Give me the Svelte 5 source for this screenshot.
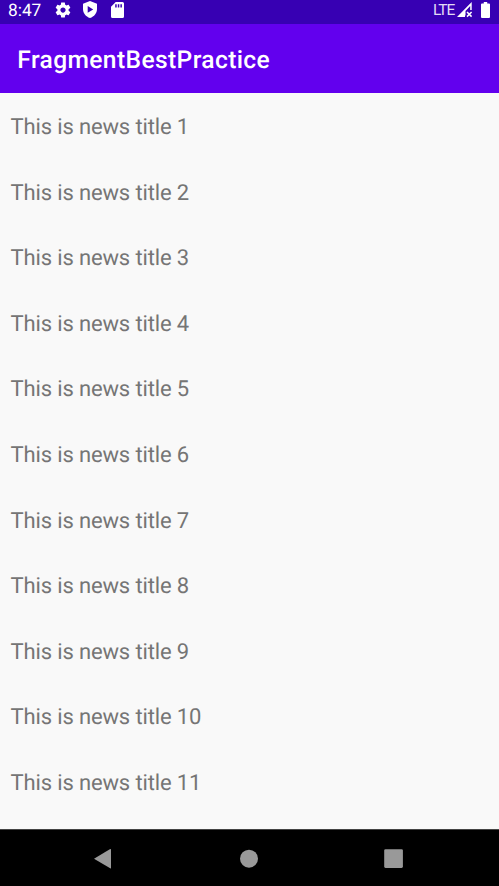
<script>
  const titles = Array.from({ length: 11 }, (_, i) => `This is news title ${i + 1}`);
</script>

<div class="screen">
  <header class="status">
    <span class="time">8:47</span>
    <svg class="gear" width="18" height="18" viewBox="0 0 24 24"><path fill-rule="evenodd" d="M19.43 12.98c.04-.32.07-.64.07-.98s-.03-.66-.07-.98l2.11-1.65c.19-.15.24-.42.12-.64l-2-3.46c-.12-.22-.39-.3-.61-.22l-2.49 1c-.52-.4-1.08-.73-1.69-.98l-.38-2.65C14.46 2.18 14.25 2 14 2h-4c-.25 0-.46.18-.49.42l-.38 2.65c-.61.25-1.17.59-1.69.98l-2.49-1c-.23-.09-.49 0-.61.22l-2 3.46c-.13.22-.07.49.12.64l2.11 1.65c-.04.32-.07.65-.07.98s.03.66.07.98l-2.11 1.65c-.19.15-.24.42-.12.64l2 3.46c.12.22.39.3.61.22l2.49-1c.52.4 1.08.73 1.69.98l.38 2.65c.03.24.24.42.49.42h4c.25 0 .46-.18.49-.42l.38-2.65c.61-.25 1.17-.59 1.69-.98l2.49 1c.23.09.49 0 .61-.22l2-3.46c.12-.22.07-.49-.12-.64l-2.11-1.65zM12 15.5c-1.93 0-3.5-1.57-3.5-3.5s1.57-3.5 3.5-3.5 3.5 1.57 3.5 3.5-1.57 3.5-3.5 3.5z"/></svg>
    <svg class="shield" width="14" height="17" viewBox="0 0 14 17"><path fill-rule="evenodd" d="M7 0 14 2.7V8c0 4-2.8 7.7-7 9-4.200-1.300-7-5-7-9V2.700zM4.700 5v6.800L10.200 8.400z"/></svg>
    <svg class="card" width="13" height="16" viewBox="0 0 13 16"><path fill-rule="evenodd" d="M4.700 0h6.800Q13 0 13 1.500v13Q13 16 11.500 16h-10Q0 16 0 14.500V4.700zM4.200 2.200v3.300h1.500V2.200zM6.800 2.200v3.300h1.500V2.200zM9.400 2.200v3.300h1.500V2.200z"/></svg>
    <span class="lte">LTE</span>
    <svg class="signal" width="16" height="16" viewBox="0 0 16 16"><path fill-rule="evenodd" d="M0 15 14.700 0v8h-1.500V4L8.500 9v4.500H8V15z"/><path d="m10 10 4.600 4.600m0-4.600L10 14.600" stroke="#fff" stroke-width="1.500"/></svg>
    <svg class="battery" width="9" height="16" viewBox="0 0 9 16"><path d="M2.800 0h3.400v1.600H8q1 0 1 1V15q0 1-1 1H1q-1 0-1-1V2.600q0-1 1-1h1.800z"/></svg>
  </header>
  <div class="appbar"><h1>FragmentBestPractice</h1></div>
  <main>
    {#each titles as title}
      <div class="row">{title}</div>
    {/each}
  </main>
  <nav>
    <svg width="499" height="56" viewBox="0 1 499 56" fill="#999">
      <path d="M94 29.700 110.200 20q.8-.3.800.5v18.400q0 .8-.8.400z"/>
      <circle cx="249" cy="29.700" r="9"/>
      <rect x="384.200" y="20.200" width="18.700" height="18.700" rx="1.300"/>
    </svg>
  </nav>
</div>

<style>
  .screen {
    width: 499px;
    height: 886px;
    overflow: hidden;
    display: flex;
    flex-direction: column;
    background: #f9f9f9;
    font-family: Roboto, sans-serif;
    text-rendering: geometricPrecision;
  }
  .status {
    height: 24px;
    flex: none;
    display: flex;
    align-items: flex-start;
    box-sizing: border-box;
    padding-left: 8px;
    background: #3700b3;
    color: #fff;
  }
  svg { display: block; flex: none; }
  .status svg { fill: #fff; }
  .time { width: 46px; font-size: 17.3px; line-height: 22px; white-space: nowrap; }
  .gear { margin-top: 1px; }
  .shield { margin: 1px 0 0 11px; }
  .card { margin: 2px 0 0 14px; }
  .lte { margin-left: 309px; width: 24px; font-size: 15.5px; line-height: 20px; letter-spacing: -1px; color: #e3daf5; white-space: nowrap; }
  .signal { margin-top: 2px; }
  .battery { margin: 2px 0 0 8px; }
  .appbar {
    height: 69px;
    flex: none;
    display: flex;
    align-items: center;
    padding-left: 17.3px;
    background: #6200ee;
  }
  h1 { margin: 4px 0 0; font-size: 24.6px; line-height: 30px; font-weight: 500; letter-spacing: 0.38px; color: #fff; white-space: nowrap; }
  main { height: 736px; flex: none; overflow: hidden; }
  .row {
    height: 65.6px;
    box-sizing: border-box;
    padding: 21px 10.5px 0;
    font-size: 22px;
    line-height: 27px;
    letter-spacing: -0.14px;
    color: #757575;
  }
  nav { height: 57px; flex: none; box-sizing: border-box; border-top: 1px solid #444; background: #000; }
</style>
